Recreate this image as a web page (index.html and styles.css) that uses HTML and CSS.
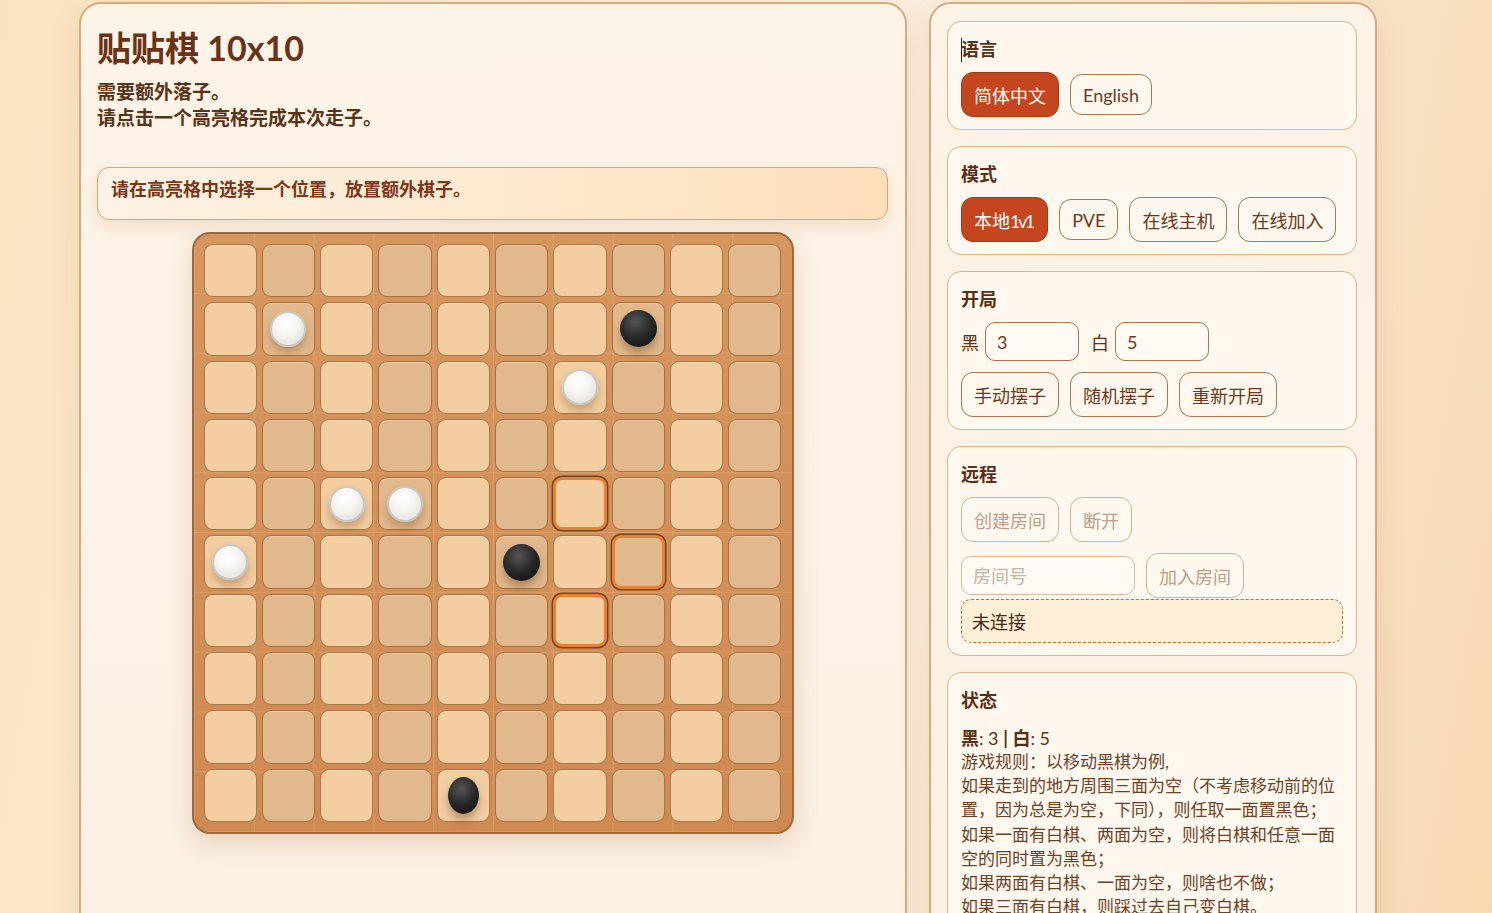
FILE: index.html
```html
<!DOCTYPE html>
<html lang="zh-CN">
<head>
<meta charset="utf-8">
<title>贴贴棋 10x10</title>
<link rel="stylesheet" href="styles.css">
</head>
<body>
<div class="page">
  <main class="game-panel">
    <h1 class="title">贴贴棋 10x10</h1>
    <p class="subtitle">需要额外落子。<br>请点击一个高亮格完成本次走子。</p>
    <div class="notice">请在高亮格中选择一个位置，放置额外棋子。</div>
    <div class="board-wrap">
      <div class="board">
        <div class="c a"></div><div class="c b"></div><div class="c a"></div><div class="c b"></div><div class="c a"></div><div class="c b"></div><div class="c a"></div><div class="c b"></div><div class="c a"></div><div class="c b"></div>
        <div class="c a"></div><div class="c b"><span class="stone white"></span></div><div class="c a"></div><div class="c b"></div><div class="c a"></div><div class="c b"></div><div class="c a"></div><div class="c b"><span class="stone black"></span></div><div class="c a"></div><div class="c b"></div>
        <div class="c a"></div><div class="c b"></div><div class="c a"></div><div class="c b"></div><div class="c a"></div><div class="c b"></div><div class="c a"><span class="stone white"></span></div><div class="c b"></div><div class="c a"></div><div class="c b"></div>
        <div class="c a"></div><div class="c b"></div><div class="c a"></div><div class="c b"></div><div class="c a"></div><div class="c b"></div><div class="c a"></div><div class="c b"></div><div class="c a"></div><div class="c b"></div>
        <div class="c a"></div><div class="c b"></div><div class="c a"><span class="stone white"></span></div><div class="c b"><span class="stone white"></span></div><div class="c a"></div><div class="c b"></div><div class="c a hl"></div><div class="c b"></div><div class="c a"></div><div class="c b"></div>
        <div class="c a"><span class="stone white"></span></div><div class="c b"></div><div class="c a"></div><div class="c b"></div><div class="c a"></div><div class="c b"><span class="stone black"></span></div><div class="c a"></div><div class="c b hl"></div><div class="c a"></div><div class="c b"></div>
        <div class="c a"></div><div class="c b"></div><div class="c a"></div><div class="c b"></div><div class="c a"></div><div class="c b"></div><div class="c a hl"></div><div class="c b"></div><div class="c a"></div><div class="c b"></div>
        <div class="c a"></div><div class="c b"></div><div class="c a"></div><div class="c b"></div><div class="c a"></div><div class="c b"></div><div class="c a"></div><div class="c b"></div><div class="c a"></div><div class="c b"></div>
        <div class="c a"></div><div class="c b"></div><div class="c a"></div><div class="c b"></div><div class="c a"></div><div class="c b"></div><div class="c a"></div><div class="c b"></div><div class="c a"></div><div class="c b"></div>
        <div class="c a"></div><div class="c b"></div><div class="c a"></div><div class="c b"></div><div class="c a"><span class="stone black oval"></span></div><div class="c b"></div><div class="c a"></div><div class="c b"></div><div class="c a"></div><div class="c b"></div>
      </div>
    </div>
  </main>

  <aside class="side-panel">
    <section class="card">
      <h2 class="card-title"><span class="caret"></span>语言</h2>
      <div class="btn-row">
        <button class="btn active">简体中文</button>
        <button class="btn">English</button>
      </div>
    </section>

    <section class="card">
      <h2 class="card-title">模式</h2>
      <div class="btn-row">
        <button class="btn active">本地<span class="tight">1v1</span></button>
        <button class="btn">PVE</button>
        <button class="btn">在线主机</button>
        <button class="btn">在线加入</button>
      </div>
    </section>

    <section class="card">
      <h2 class="card-title">开局</h2>
      <div class="field-row">
        <span class="lbl">黑</span>
        <input class="input num" type="text" value="3">
        <span class="lbl lbl-gap">白</span>
        <input class="input num" type="text" value="5">
      </div>
      <div class="btn-row">
        <button class="btn">手动摆子</button>
        <button class="btn">随机摆子</button>
        <button class="btn">重新开局</button>
      </div>
    </section>

    <section class="card">
      <h2 class="card-title">远程</h2>
      <div class="btn-row">
        <button class="btn" disabled>创建房间</button>
        <button class="btn" disabled>断开</button>
      </div>
      <div class="btn-row room-row">
        <input class="input room" type="text" placeholder="房间号" disabled>
        <button class="btn" disabled>加入房间</button>
      </div>
      <div class="conn">未连接</div>
    </section>

    <section class="card">
      <h2 class="card-title">状态</h2>
      <p class="score"><b>黑</b>: 3 <b>|</b> <b>白</b>: 5</p>
      <p class="rules">游戏规则：以移动黑棋为例,<br>如果走到的地方周围三面为空（不考虑移动前的位置，因为总是为空，下同），则任取一面置黑色；<br>如果一面有白棋、两面为空，则将白棋和任意一面空的同时置为黑色；<br>如果两面有白棋、一面为空，则啥也不做；<br>如果三面有白棋，则踩过去自己变白棋。</p>
    </section>
  </aside>
</div>
</body>
</html>
```

FILE: styles.css
```css
* { box-sizing: border-box; }

html, body { margin: 0; }

body {
  font-family: "Lato", "Noto Sans CJK SC", sans-serif;
  color: #5a3418;
  min-height: 100vh;
  background: linear-gradient(100deg, #fbe3c0 0%, #fcefdf 40%, #fbeedd 62%, #f7d8b0 100%);
  overflow: hidden;
}

.page {
  display: flex;
  align-items: flex-start;
  gap: 22px;
  padding: 2px 0 0 79px;
}

/* ---------- left panel ---------- */
.game-panel {
  width: 828px;
  min-height: 1000px;
  border: 2px solid #d4aa7e;
  border-radius: 22px;
  background: linear-gradient(180deg, #fdf4e8 0%, #fcf0e2 100%);
  padding: 24px 17px 40px 16px;
  box-shadow: 0 10px 30px rgba(170, 110, 50, 0.16);
}

.title {
  margin: 0;
  font-size: 34px;
  line-height: 40px;
  font-weight: 700;
  color: #6a3318;
}

.subtitle {
  margin: 11px 0 0;
  font-size: 19px;
  line-height: 26px;
  font-weight: 700;
  color: #5a3418;
}

.notice {
  margin-top: 36px;
  height: 53px;
  border: 1px solid #e2a36e;
  border-radius: 12px;
  background: linear-gradient(90deg, #fdf2e4 0%, #fde8cc 60%, #fddfb9 100%);
  padding: 8px 13px 0;
  font-size: 18px;
  line-height: 26px;
  font-weight: 700;
  color: #7a3818;
  box-shadow: 0 7px 16px rgba(200, 130, 60, 0.18);
}

.board-wrap {
  display: flex;
  justify-content: center;
  margin-top: 12px;
}

.board {
  width: 602px;
  height: 602px;
  border: 2px solid #9b6a3e;
  border-radius: 18px;
  background-color: #d4925a;
  background-image:
    linear-gradient(90deg, rgba(255, 214, 160, 0.2) 1px, transparent 1px),
    linear-gradient(0deg, rgba(255, 214, 160, 0.2) 1px, transparent 1px),
    linear-gradient(180deg, #d6965e 0%, #cf8a52 100%);
  background-size: 10% 10%, 10% 10%, 100% 100%;
  padding: 10px;
  display: grid;
  grid-template-columns: repeat(10, 1fr);
  grid-template-rows: repeat(10, 1fr);
  gap: 5px;
  box-shadow: 0 10px 24px rgba(140, 80, 30, 0.18);
}

.c {
  border: 1px solid rgba(140, 82, 34, 0.7);
  border-radius: 9px;
  display: flex;
  align-items: center;
  justify-content: center;
  box-shadow: inset 0 1px 0 rgba(255, 255, 255, 0.25);
}

.a { background: #f2cea1; }
.b { background: #e2b98c; }

.hl {
  border: 3px solid #ea7f36;
  box-shadow: 0 0 0 1.5px #74461f;
}

.stone {
  width: 36px;
  height: 36px;
  border-radius: 50%;
}

.white {
  background: radial-gradient(circle at 42% 35%, #ffffff 0%, #f6f5f2 40%, #dddbd6 100%);
  border: 2px solid #c8c8c5;
  box-shadow: 0 6px 9px rgba(110, 60, 20, 0.3);
}

.black {
  width: 37px;
  height: 37px;
  background: radial-gradient(circle at 42% 32%, #555 0%, #262626 50%, #0e0e0e 100%);
  box-shadow: 0 6px 9px rgba(80, 40, 10, 0.35);
}

.black.oval {
  width: 31px;
  height: 37px;
}

/* ---------- right panel ---------- */
.side-panel {
  width: 448px;
  min-height: 1000px;
  border: 2px solid #d4aa7e;
  border-radius: 22px;
  background: linear-gradient(180deg, #fdf3e6 0%, #fcf0e2 100%);
  padding: 17px 18px 16px 16px;
  display: flex;
  flex-direction: column;
  gap: 16px;
  box-shadow: 0 10px 30px rgba(170, 110, 50, 0.16);
}

.card {
  border: 1px solid #dcb48c;
  border-radius: 14px;
  background: #fff8ef;
  padding: 14px 13px 12px;
}

.card-title {
  margin: 0 0 10px;
  font-size: 18px;
  line-height: 26px;
  font-weight: 700;
  color: #5a3015;
}

.caret {
  display: inline-block;
  width: 1px;
  height: 24px;
  background: #3a2010;
  vertical-align: -6px;
  margin-right: -1px;
}

.btn-row {
  display: flex;
  align-items: center;
  flex-wrap: wrap;
  gap: 11px;
}

.btn {
  font-family: inherit;
  font-size: 18px;
  line-height: normal;
  padding: 8.5px 12px;
  border: 1px solid #a87650;
  border-radius: 12px;
  background: #fff8ee;
  color: #6b3a1c;
}

.tight { letter-spacing: -2.5px; margin-right: 2.5px; }

.btn.active {
  background: #c4461f;
  border-color: #a63a17;
  color: #ffffff;
}

.btn:disabled {
  color: #b9a08a;
  border-color: #d3b394;
  background: transparent;
}

.field-row {
  display: flex;
  align-items: center;
  gap: 6px;
  margin-bottom: 11px;
  font-size: 18px;
}

.lbl { color: #5a3418; }
.lbl-gap { margin-left: 6px; }

.input {
  height: 39px;
  border: 1px solid #a87650;
  border-radius: 10px;
  background: #fffaf3;
  font-family: inherit;
  font-size: 18px;
  color: #6b3a1c;
  padding: 0 11px;
}

.input.num { width: 94px; }

.input.room {
  width: 174px;
  border-color: #d9bb9c;
  background: #fffaf3;
}

.input.room::placeholder { color: #c2b4a6; }

.room-row { margin-top: 11px; }

.conn {
  margin-top: 1px;
  height: 44px;
  border: 1px dashed #b8703c;
  border-radius: 10px;
  background: #fdefd6;
  padding: 0 10px;
  display: flex;
  align-items: center;
  font-size: 18px;
  color: #4a2812;
}

.score {
  margin: 13px 0 0;
  font-size: 18px;
  line-height: 24px;
  color: #5a3015;
}

.score b { font-weight: 700; }

.rules {
  margin: 0;
  font-size: 17px;
  line-height: 24.2px;
  color: #6b4226;
}
```
